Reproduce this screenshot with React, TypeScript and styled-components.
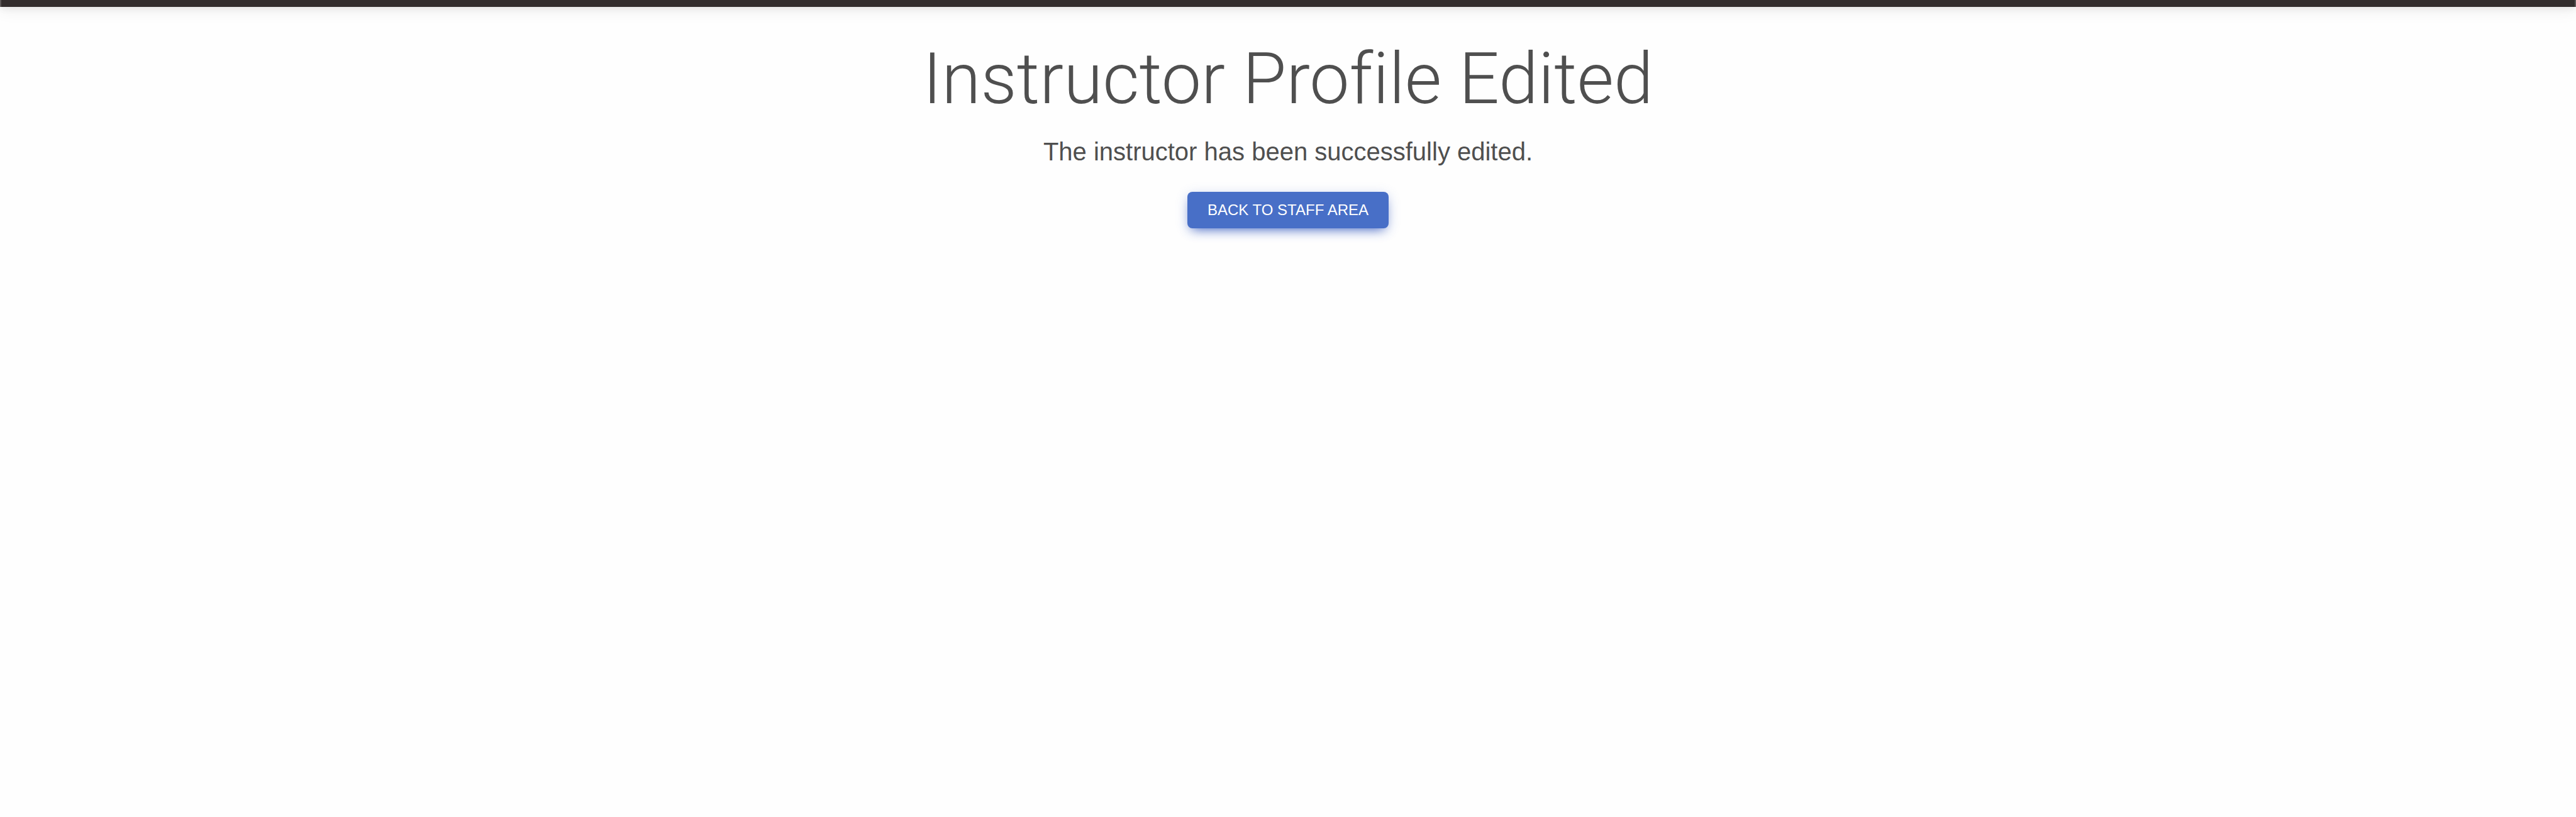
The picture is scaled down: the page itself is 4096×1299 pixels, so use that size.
import React from 'react';
import styled, { createGlobalStyle } from 'styled-components';

const GlobalStyle = createGlobalStyle`
  body {
    margin: 0;
    background: #fefefe;
    color: #4f4f4f;
    font-family: "Liberation Sans", Arial, sans-serif;
    font-weight: 300;
  }
`;

const Navbar = styled.header`
  height: 11px;
  border: solid #5b5656;
  border-width: 0 2px;
  background: #332d2d;
  box-shadow: 0 4px 24px rgba(0, 0, 0, 0.1), 0 4px 10px rgba(0, 0, 0, 0.06);
`;

const Main = styled.main`
  display: flex;
  flex-direction: column;
  align-items: center;
  padding: 48px 24px;
  text-align: center;
`;

const Title = styled.h1`
  margin: 0 0 16px;
  font-family: Roboto, "Liberation Sans", Arial, sans-serif;
  font-size: 113px;
  font-weight: 300;
  font-variant-ligatures: none;
  line-height: 134px;
`;

const Message = styled.p`
  margin: 0 0 32px;
  font-size: 40px;
  line-height: 64px;
`;

const Button = styled.button`
  padding: 14px 32px;
  border: 0;
  border-radius: 8px;
  background: #486fc7;
  color: #fff;
  font-family: inherit;
  font-size: 24px;
  line-height: 30px;
  text-transform: uppercase;
  box-shadow: 0 8px 18px -8px #3b5fc0, 0 4px 20px rgba(59, 95, 192, 0.2);
  cursor: pointer;
`;

export default function App() {
  return (
    <>
      <GlobalStyle />
      <Navbar />
      <Main>
        <Title>Instructor Profile Edited</Title>
        <Message>The instructor has been successfully edited.</Message>
        <Button type="button">Back to staff area</Button>
      </Main>
    </>
  );
}
